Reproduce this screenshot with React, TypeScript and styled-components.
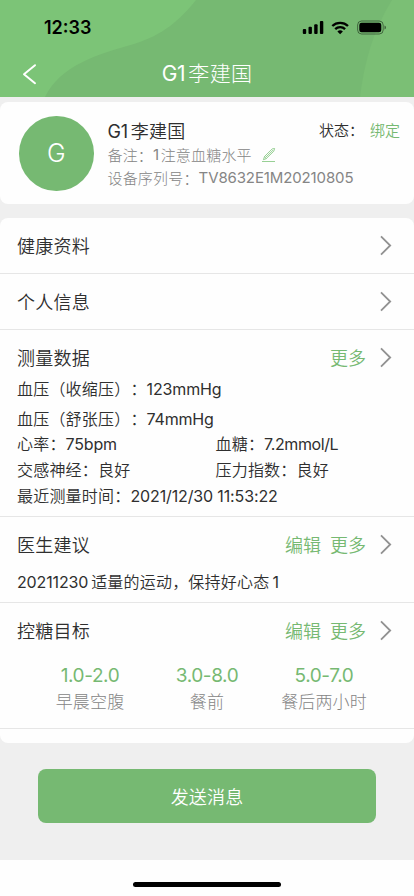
import React from 'react';
import styled, { createGlobalStyle } from 'styled-components';

const GlobalStyle = createGlobalStyle`
  * { box-sizing: border-box; }
  body {
    margin: 0;
    background: #efefef;
    font-family: Inter, "Noto Sans CJK SC", sans-serif;
    font-weight: 350;
    color: #2f2f2f;
    text-spacing-trim: space-all;
    -webkit-font-smoothing: antialiased;
  }
`;

const Screen = styled.div`
  width: 414px;
  height: 896px;
  display: flex;
  flex-direction: column;
  background: #efefef;
  overflow: hidden;
`;

const Header = styled.header`
  position: relative;
  height: 97px;
  flex: none;
  background: #76b972;
`;

const Waves = styled.svg`
  position: absolute;
  inset: 0;
  display: block;
`;

const HeaderContent = styled.div`
  position: relative;
  display: flex;
  flex-direction: column;
`;

const StatusBar = styled.div`
  height: 50px;
  padding: 5px 28px 0 44px;
  display: flex;
  align-items: center;
  justify-content: space-between;
`;

const Clock = styled.span`
  font-size: 18px;
  line-height: 22px;
  font-weight: 600;
  color: #000;
`;

const NavBar = styled.div`
  height: 47px;
  padding: 0 22px;
  display: grid;
  grid-template-columns: 40px 1fr 40px;
  align-items: center;
`;

const BackButton = styled.button`
  display: flex;
  padding: 0;
  border: 0;
  background: none;
`;

const Title = styled.h1`
  margin: 0;
  text-align: center;
  color: #fff;
  font-size: 21px;
  line-height: 30px;
  font-weight: 300;
  letter-spacing: 0.3px;
`;

const ProfileCard = styled.section`
  margin-top: 5px;
  height: 102px;
  flex: none;
  display: flex;
  padding: 14px 14px 0 19px;
  border-radius: 8px;
  background: #fefefe;
`;

const Avatar = styled.div`
  width: 74.5px;
  height: 74.5px;
  flex: none;
  border-radius: 50%;
  background: #76b972;
  color: #fff;
  font-size: 25px;
  display: flex;
  align-items: center;
  justify-content: center;
`;

const ProfileText = styled.div`
  margin-left: 14px;
  flex: 1;
  white-space: nowrap;
`;

const NameLine = styled.div`
  display: flex;
  align-items: center;
  justify-content: space-between;
  height: 27px;
`;

const Name = styled.span`
  font-size: 18px;
  letter-spacing: 0.25px;
`;

const Status = styled.span`
  display: flex;
  font-size: 15px;
  gap: 6px;
`;

const Bound = styled.span`
  color: #76b972;
`;

const Meta = styled.div<{ $h: number }>`
  display: flex;
  align-items: center;
  height: ${(p) => p.$h}px;
  font-size: 15px;
  font-weight: 300;
  letter-spacing: 0.18px;
  color: #858585;
`;

const PenIcon = styled.svg`
  margin-left: 9px;
`;

const Latin = styled.span<{ $track?: number; $before?: number; $after?: number }>`
  font-weight: 380;
  letter-spacing: ${(p) => p.$track ?? 0}px;
  margin-left: ${(p) => p.$before ?? 0}px;
  margin-right: ${(p) => p.$after ?? 0}px;
`;

const Card = styled.main`
  margin-top: 14px;
  height: 525px;
  flex: none;
  border-radius: 8px;
  background: #fefefe;
`;

const Section = styled.section<{ $height: number }>`
  height: ${(p) => p.$height}px;
  border-bottom: 1px solid #e6e6e6;
  padding: 10px 17px 0;
`;

const SectionHead = styled.div`
  height: 35px;
  display: flex;
  align-items: center;
`;

const SectionTitle = styled.h2`
  flex: 1;
  margin: 0;
  padding-top: 2px;
  font-size: 18px;
  line-height: 26px;
  font-weight: inherit;
  letter-spacing: 0.25px;
`;

const Action = styled.a`
  margin-left: 9px;
  padding-top: 2px;
  font-size: 18px;
  line-height: 26px;
  font-weight: inherit;
  color: #76b972;
`;

const ChevronIcon = styled.svg`
  margin-left: 13px;
  margin-right: 4px;
`;

const Line = styled.div<{ $h: number }>`
  display: grid;
  grid-template-columns: 198.5px 1fr;
  align-items: center;
  height: ${(p) => p.$h}px;
  font-size: 16px;
  line-height: 19px;
  letter-spacing: 0.2px;
  white-space: nowrap;
`;

const WideCell = styled.span`
  grid-column: 1 / -1;
`;

const Goals = styled.div`
  display: grid;
  grid-template-columns: repeat(3, 117px);
  justify-content: center;
  margin-top: 14px;
  text-align: center;
`;

const GoalRange = styled.div`
  height: 27px;
  line-height: 27px;
  font-size: 19px;
  font-weight: 400;
  letter-spacing: -0.4px;
  color: #76b972;
`;

const GoalLabel = styled.div`
  height: 27px;
  line-height: 27px;
  font-size: 17px;
  font-weight: 300;
  letter-spacing: 0.15px;
  color: #858585;
`;

const SendButton = styled.button`
  margin: 26px 38px 0;
  height: 54px;
  flex: none;
  border: 0;
  border-radius: 8px;
  background: #76b972;
  color: #fff;
  font-family: inherit;
  font-size: 18px;
  font-weight: 350;
  letter-spacing: 0.15px;
`;

const HomeArea = styled.footer`
  margin-top: auto;
  height: 36px;
  flex: none;
  display: flex;
  justify-content: center;
  padding-top: 22px;
  background: #fefefe;
`;

const HomeIndicator = styled.div`
  width: 148px;
  height: 5px;
  border-radius: 3px;
  background: #000;
`;

const Chevron = () => (
  <ChevronIcon width="14" height="22" viewBox="0 0 14 22" fill="none">
    <path d="M2 1.3 11.2 10.5 2 19.7" stroke="#919191" strokeWidth="1.8" />
  </ChevronIcon>
);

const StatusIcons = () => (
  <svg width="84" height="16" viewBox="302 20 84 16">
    <rect x="302.8" y="29" width="3.4" height="5" rx="1" />
    <rect x="308.5" y="26.8" width="3.4" height="7.2" rx="1" />
    <rect x="314.2" y="24.2" width="3.4" height="9.8" rx="1" />
    <rect x="319.9" y="21" width="3.4" height="13" rx="1" />
    <g fill="none" stroke="#000" strokeWidth="2.3">
      <path d="M332.3 26A11.3 11.3 0 0 1 348 26" />
      <path d="M335.2 29.1A7 7 0 0 1 345.1 29.1" />
    </g>
    <path d="M337.4 31.4A4.2 4.2 0 0 1 342.9 31.4L340.15 34.2Z" />
    <rect x="357.6" y="21" width="25.6" height="13" rx="4" fill="none" stroke="#000" strokeOpacity=".45" />
    <rect x="359.3" y="22.7" width="22" height="9.6" rx="2.3" />
    <path d="M384.5 25.5Q386 26 386 27.5T384.5 29.5Z" fillOpacity=".5" />
  </svg>
);

export default function App() {
  return (
    <>
      <GlobalStyle />
      <Screen>
        <Header>
          <Waves width="414" height="97" viewBox="0 0 414 97">
            <path d="M0 0H196C180 20 163 35 134 44C97 54 60 66 45 97H0Z" fill="#7cc477" />
            <path d="M392 0H414V97H360C364 65 372 32 392 0Z" fill="#7bbf75" />
          </Waves>
          <HeaderContent>
            <StatusBar>
              <Clock>12:33</Clock>
              <StatusIcons />
            </StatusBar>
            <NavBar>
              <BackButton aria-label="返回">
                <svg width="15" height="22" viewBox="0 0 15 22" fill="none">
                  <path d="M13 2.2 2 11.2 13 20.2" stroke="#fff" strokeWidth="2" strokeLinecap="round" strokeLinejoin="round" />
                </svg>
              </BackButton>
              <Title><Latin $track={-0.3} $after={3}>G1</Latin>李建国</Title>
            </NavBar>
          </HeaderContent>
        </Header>

        <ProfileCard>
          <Avatar>G</Avatar>
          <ProfileText>
            <NameLine>
              <Name><Latin $track={-0.3} $after={3}>G1</Latin>李建国</Name>
              <Status>
                <span>状态：</span>
                <Bound>绑定</Bound>
              </Status>
            </NameLine>
            <Meta $h={23}>
              备注：<Latin $after={1.5}>1</Latin>注意血糖水平
              <PenIcon width="16" height="16" viewBox="0 0 16 16" fill="none" stroke="#7dc47a" strokeWidth=".8">
                <path d="M2.4 12.7 3.6 9.4 11.2 1.9 13.6 1.5 12.8 4.2 5.2 11.7 2.4 12.7ZM3.6 9.4 5.2 11.7M5 10 12 3.2M1 14.5H14" />
              </PenIcon>
            </Meta>
            <Meta $h={23}>
              设备序列号：<Latin $track={-0.12}>TV8632E1M20210805</Latin>
            </Meta>
          </ProfileText>
        </ProfileCard>

        <Card>
          <Section $height={56}>
            <SectionHead>
              <SectionTitle>健康资料</SectionTitle>
              <Chevron />
            </SectionHead>
          </Section>
          <Section $height={56}>
            <SectionHead>
              <SectionTitle>个人信息</SectionTitle>
              <Chevron />
            </SectionHead>
          </Section>
          <Section $height={187}>
            <SectionHead>
              <SectionTitle>测量数据</SectionTitle>
              <Action>更多</Action>
              <Chevron />
            </SectionHead>
            <Line $h={29}>
              <WideCell>血压（收缩压）：<Latin $track={-0.15}>123mmHg</Latin></WideCell>
            </Line>
            <Line $h={30}>
              <WideCell>血压（舒张压）：<Latin $track={-0.2}>74mmHg</Latin></WideCell>
            </Line>
            <Line $h={20}>
              <span>心率：<Latin $track={-0.2}>75bpm</Latin></span>
              <span>血糖：<Latin $track={-0.4}>7.2mmol/L</Latin></span>
            </Line>
            <Line $h={32}>
              <span>交感神经：良好</span>
              <span>压力指数：良好</span>
            </Line>
            <Line $h={21}>
              <WideCell>最近测量时间：<Latin $track={-0.13}>2021/12/30 11:53:22</Latin></WideCell>
            </Line>
          </Section>
          <Section $height={86}>
            <SectionHead>
              <SectionTitle>医生建议</SectionTitle>
              <Action>编辑</Action>
              <Action>更多</Action>
              <Chevron />
            </SectionHead>
            <Line $h={40}>
              <WideCell>
                <Latin $track={-0.15} $after={3}>20211230</Latin>适量的运动，保持好心态<Latin $before={3}>1</Latin>
              </WideCell>
            </Line>
          </Section>
          <Section $height={126}>
            <SectionHead>
              <SectionTitle>控糖目标</SectionTitle>
              <Action>编辑</Action>
              <Action>更多</Action>
              <Chevron />
            </SectionHead>
            <Goals>
              <div>
                <GoalRange>1.0-2.0</GoalRange>
                <GoalLabel>早晨空腹</GoalLabel>
              </div>
              <div>
                <GoalRange>3.0-8.0</GoalRange>
                <GoalLabel>餐前</GoalLabel>
              </div>
              <div>
                <GoalRange>5.0-7.0</GoalRange>
                <GoalLabel>餐后两小时</GoalLabel>
              </div>
            </Goals>
          </Section>
        </Card>

        <SendButton>发送消息</SendButton>
        <HomeArea>
          <HomeIndicator />
        </HomeArea>
      </Screen>
    </>
  );
}
